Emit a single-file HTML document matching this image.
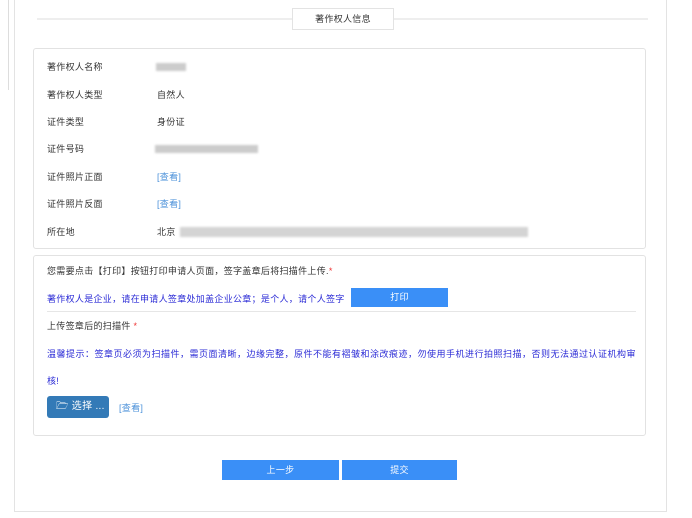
<!DOCTYPE html>
<html><head><meta charset="utf-8"><style>
body{margin:0;width:692px;height:518px;background:#fff;position:relative;overflow:hidden;font-family:"Liberation Sans","Noto Sans CJK SC",sans-serif;font-size:9px;letter-spacing:0.3px;color:#333}
.a{position:absolute}
.outer{left:14px;top:-2px;width:651px;height:513px;border:1px solid #e3e3e3;border-top:none}
.card{border:1px solid #e2e2e2;border-radius:3px;left:33px;width:611px}
.t{position:absolute;line-height:12px;white-space:nowrap}
.blur{position:absolute;background:#ccc;height:8px;filter:blur(1px)}
.lnk{color:#4a90d9}
.blue{color:#2b2bd6}
.btn{position:absolute;background:#3a8ff7;color:#fff;text-align:center}
</style></head><body>
<div class="a" style="left:8px;top:0;width:1px;height:90px;background:#ddd"></div>
<div class="a outer"></div>
<div class="a" style="left:37px;top:18px;width:611px;height:2px;background:#eee"></div>
<div class="a" style="left:292px;top:8px;width:100px;height:20px;border:1px solid #e3e3e3;background:#fff;text-align:center;line-height:20px;font-size:9px">著作权人信息</div>
<div class="a card" style="top:48px;height:199px"></div>
<div class="t" style="left:47px;top:61px">著作权人名称</div><div class="blur" style="left:156px;top:63px;width:30px"></div>
<div class="t" style="left:47px;top:89px">著作权人类型</div><div class="t" style="left:157px;top:89px">自然人</div>
<div class="t" style="left:47px;top:116px">证件类型</div><div class="t" style="left:157px;top:116px">身份证</div>
<div class="t" style="left:47px;top:143px">证件号码</div><div class="blur" style="left:155px;top:145px;width:103px"></div>
<div class="t" style="left:47px;top:171px">证件照片正面</div><div class="t lnk" style="left:157px;top:171px">[查看]</div>
<div class="t" style="left:47px;top:198px">证件照片反面</div><div class="t lnk" style="left:157px;top:198px">[查看]</div>
<div class="t" style="left:47px;top:226px">所在地</div><div class="t" style="left:157px;top:226px">北京</div><div class="blur" style="left:180px;top:227px;width:348px;height:10px;background:#d4d4d4"></div>
<div class="a card" style="top:255px;height:179px"></div>
<div class="t" style="left:47px;top:265px">您需要点击【打印】按钮打印申请人页面，签字盖章后将扫描件上传.<span style="color:#e33">*</span></div>
<div class="t blue" style="left:47px;top:293px">著作权人是企业，请在申请人签章处加盖企业公章；是个人，请个人签字</div>
<div class="btn" style="left:351px;top:288px;width:97px;height:19px;line-height:19px">打印</div>
<div class="a" style="left:47px;top:311px;width:589px;height:1px;background:#e6e6e6"></div>
<div class="t" style="left:47px;top:320px">上传签章后的扫描件 <span style="color:#e33">*</span></div>
<div class="t blue" style="left:47px;top:348px;letter-spacing:0.5px">温馨提示：签章页必须为扫描件，需页面清晰，边缘完整，原件不能有褶皱和涂改痕迹，勿使用手机进行拍照扫描，否则无法通过认证机构审</div>
<div class="t blue" style="left:47px;top:375px">核!</div>
<div class="a" style="left:47px;top:396px;width:62px;height:22px;background:#337ab7;border-radius:3px;color:#fff;line-height:22px;font-size:10px"><span style="margin-left:9px">🗁</span> 选择 ...</div>
<div class="t lnk" style="left:119px;top:402px">[查看]</div>
<div class="btn" style="left:222px;top:460px;width:117px;height:20px;line-height:20px">上一步</div>
<div class="btn" style="left:342px;top:460px;width:115px;height:20px;line-height:20px">提交</div>
</body></html>
